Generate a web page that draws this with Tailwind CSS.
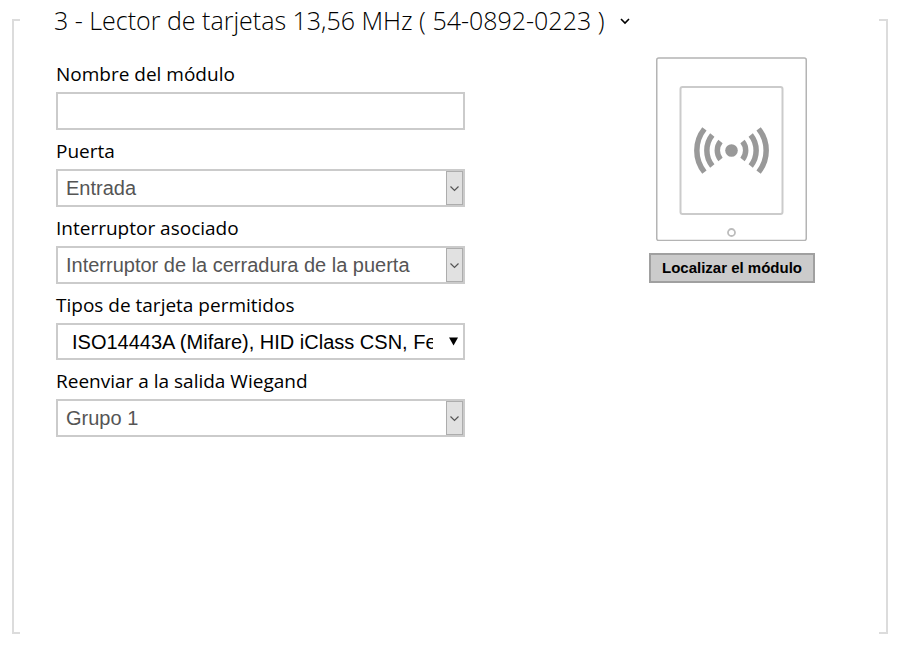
<!DOCTYPE html>
<html lang="es">
<head>
    <meta charset="UTF-8">
    <meta name="viewport" content="width=device-width, initial-scale=1.0">
    <title>Lector de tarjetas</title>
    <script src="https://cdn.jsdelivr.net/npm/@tailwindcss/browser@4"></script>
</head>
<body class="bg-white text-black font-['Open_Sans',sans-serif]">
    <main class="flex min-h-screen pl-3 pr-[9px] pb-[14px]">
        <!-- left bracket -->
        <div class="w-2 mt-[19px] border-2 border-r-0 border-[#dcdcdc]"></div>

        <div class="flex-1 pl-[34px] pr-16">
            <div class="flex items-center gap-3 h-[42px]">
                <h1 class="text-[25px] font-light whitespace-nowrap">3 - Lector de tarjetas 13,56 MHz ( 54-0892-0223 )</h1>
                <button type="button" aria-label="Mostrar opciones" class="p-1 cursor-pointer">
                    <svg class="w-2.5 h-2.5" viewBox="0 0 10 10" fill="none" stroke="#000" stroke-width="1.6"><path d="M1 3l4 4 4-4"/></svg>
                </button>
            </div>

            <div class="flex items-start justify-between gap-8 pt-[15px] pl-[2px]">
                <form class="w-full max-w-[409px] flex flex-col gap-1">
                    <div>
                        <label for="name" class="block leading-[35px] text-[19px]">Nombre del módulo</label>
                        <input type="text" id="name" class="block w-full h-[38px] px-2 border-2 border-[#cbcbcb] text-xl font-['Liberation_Sans',sans-serif]">
                    </div>
                    <div>
                        <label for="door" class="block leading-[35px] text-[19px]">Puerta</label>
                        <div class="relative">
                            <select id="door" class="block w-full h-[38px] pl-2 pr-6 border-2 border-[#cbcbcb] appearance-none bg-white text-[#555] text-xl font-['Liberation_Sans',sans-serif]">
                                <option>Entrada</option>
                                <option>Salida</option>
                            </select>
                            <span class="absolute inset-y-0.5 right-0.5 w-[17px] flex items-center justify-center border border-[#adadad] bg-[#e1e1e1] pointer-events-none">
                                <svg class="w-[9px] h-[9px]" viewBox="0 0 9 9" fill="none" stroke="#555" stroke-width="1.2"><path d="M.5 2.5l4 4 4-4"/></svg>
                            </span>
                        </div>
                    </div>
                    <div>
                        <label for="switch" class="block leading-[35px] text-[19px]">Interruptor asociado</label>
                        <div class="relative">
                            <select id="switch" class="block w-full h-[38px] pl-2 pr-6 border-2 border-[#cbcbcb] appearance-none bg-white text-[#555] text-xl font-['Liberation_Sans',sans-serif]">
                                <option>Interruptor de la cerradura de la puerta</option>
                            </select>
                            <span class="absolute inset-y-0.5 right-0.5 w-[17px] flex items-center justify-center border border-[#adadad] bg-[#e1e1e1] pointer-events-none">
                                <svg class="w-[9px] h-[9px]" viewBox="0 0 9 9" fill="none" stroke="#555" stroke-width="1.2"><path d="M.5 2.5l4 4 4-4"/></svg>
                            </span>
                        </div>
                    </div>
                    <div>
                        <label for="cards" class="block leading-[35px] text-[19px]">Tipos de tarjeta permitidos</label>
                        <div class="relative">
                            <select id="cards" class="block w-full h-[37px] pl-[14px] pr-[30px] border-2 border-[#cbcbcb] appearance-none bg-white text-black text-xl font-['Liberation_Sans',sans-serif]">
                                <option>ISO14443A (Mifare), HID iClass CSN, Fe</option>
                            </select>
                            <span class="absolute inset-y-0.5 right-[7px] flex items-center pointer-events-none">
                                <svg class="w-[9px] h-[9px]" viewBox="0 0 9 9" fill="#000"><path d="M0 .5h9l-4.5 8z"/></svg>
                            </span>
                        </div>
                    </div>
                    <div>
                        <label for="wiegand" class="block leading-[35px] text-[19px]">Reenviar a la salida Wiegand</label>
                        <div class="relative">
                            <select id="wiegand" class="block w-full h-[38px] pl-2 pr-6 border-2 border-[#cbcbcb] appearance-none bg-white text-[#555] text-xl font-['Liberation_Sans',sans-serif]">
                                <option>Grupo 1</option>
                                <option>Grupo 2</option>
                            </select>
                            <span class="absolute inset-y-0.5 right-0.5 w-[17px] flex items-center justify-center border border-[#adadad] bg-[#e1e1e1] pointer-events-none">
                                <svg class="w-[9px] h-[9px]" viewBox="0 0 9 9" fill="none" stroke="#555" stroke-width="1.2"><path d="M.5 2.5l4 4 4-4"/></svg>
                            </span>
                        </div>
                    </div>
                </form>

                <div class="shrink-0 flex flex-col items-center gap-3">
                    <!-- card reader -->
                    <svg class="w-[151px] h-[184px]" viewBox="0 0 151 184" fill="none">
                        <rect x="0.75" y="1" width="149.5" height="182.5" rx="2" stroke="#b4b4b4" stroke-width="1.5"/>
                        <rect x="24.5" y="30" width="102" height="127" rx="2" stroke="#cbcbcb" stroke-width="2"/>
                        <circle cx="75.5" cy="175.5" r="3.5" stroke="#bcbcbc" stroke-width="1.8"/>
                        <circle cx="75.5" cy="93.5" r="6.3" fill="#999"/>
                        <g stroke="#999" stroke-width="5.5">
                            <path d="M86.5 84.6a14 14 0 0 1 0 17.8M94.7 78.1a24.5 24.5 0 0 1 0 30.8M102.6 71.9a34.6 34.6 0 0 1 0 43.2"/>
                            <path d="M64.5 84.6a14 14 0 0 0 0 17.8M56.3 78.1a24.5 24.5 0 0 0 0 30.8M48.4 71.9a34.6 34.6 0 0 0 0 43.2"/>
                        </g>
                    </svg>
                    <button type="button" class="h-[30px] px-[11px] border-2 border-[#a0a0a0] bg-[#cbcbcb] text-[15px] font-bold font-['Liberation_Sans',sans-serif] cursor-pointer">Localizar el módulo</button>
                </div>
            </div>
        </div>

        <!-- right bracket -->
        <div class="w-[9px] mt-[19px] border-2 border-l-0 border-[#dcdcdc]"></div>
    </main>
</body>
</html>
